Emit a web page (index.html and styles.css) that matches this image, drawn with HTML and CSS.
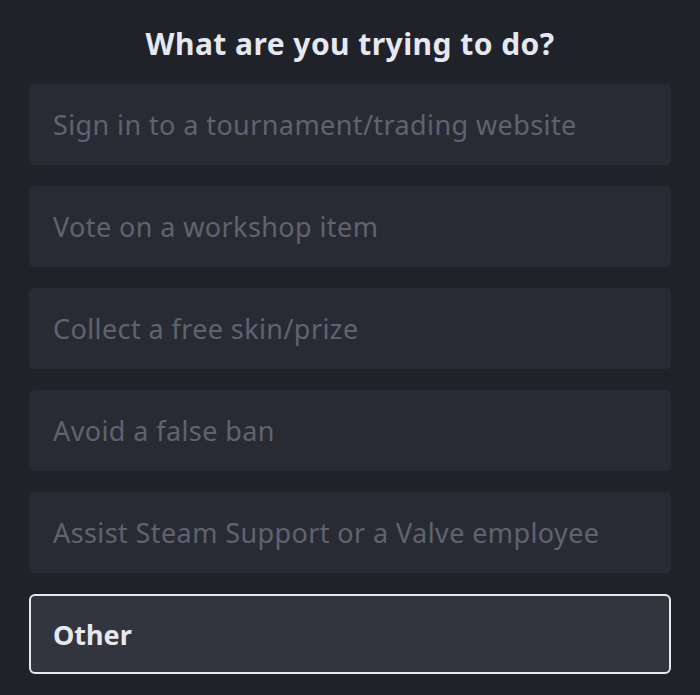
FILE: index.html
```html
<!DOCTYPE html>
<html>
<head>
<meta charset="utf-8">
<link rel="stylesheet" href="styles.css">
</head>
<body>
<div class="page">
  <h1 class="title">What are you trying to do?</h1>
  <div class="options">
    <div class="option">Sign in to a tournament/trading website</div>
    <div class="option">Vote on a workshop item</div>
    <div class="option">Collect a free skin/prize</div>
    <div class="option">Avoid a false ban</div>
    <div class="option">Assist Steam Support or a Valve employee</div>
    <div class="option selected">Other</div>
  </div>
</div>
</body>
</html>
```
FILE: styles.css
```css
html, body {
  margin: 0;
  padding: 0;
  background: #20222a;
}
.page {
  width: 700px;
  height: 695px;
  padding: 24px 29px 0 29px;
  box-sizing: border-box;
  font-family: "Noto Sans", "Open Sans", sans-serif;
}
.title {
  margin: 0;
  text-align: center;
  color: #e6e8ef;
  font-size: 30px;
  letter-spacing: 0.45px;
  font-weight: 700;
  line-height: 40px;
}
.options {
  margin-top: 20px;
  display: flex;
  flex-direction: column;
  gap: 21px;
}
.option {
  height: 81px;
  box-sizing: border-box;
  display: flex;
  align-items: center;
  padding-left: 24px;
  background: #292b34;
  border-radius: 5px;
  color: #5f6370;
  font-size: 27px;
  letter-spacing: 0.4px;
}
.option.selected {
  background: #33353e;
  border: 2px solid #e8e8ec;
  border-radius: 6px;
  padding-left: 22px;
  color: #e6e8ef;
  font-weight: 700;
  letter-spacing: 0;
  height: 80px;
}
```
